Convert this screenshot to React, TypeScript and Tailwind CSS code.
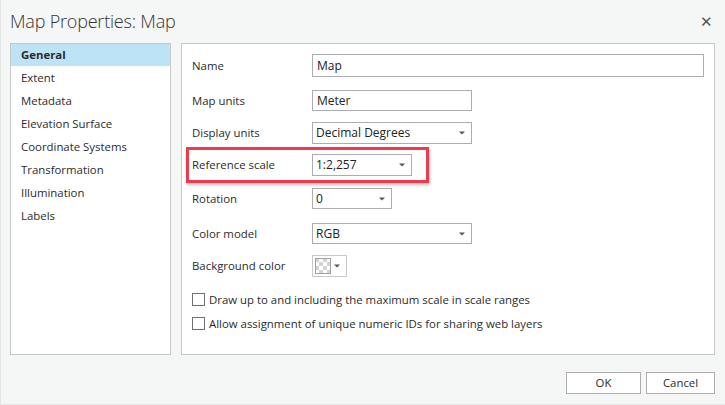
import React from "react";

const font = { fontFamily: '"Open Sans", "Noto Sans", sans-serif' };

function Caret() {
  return (
    <svg width="6" height="4" viewBox="0 0 6 4" className="shrink-0">
      <path d="M0 0.5 L6 0.5 L3 3.5 Z" fill="#555" />
    </svg>
  );
}

function TextBox({ value, w }: { value: string; w: string }) {
  return (
    <div className={`${w} h-full border border-[#abadb3] bg-white flex items-center pl-[4px] text-[12px] text-[#222]`}>
      {value}
    </div>
  );
}

function Select({ value, w }: { value: string; w: string }) {
  return (
    <div className={`${w} h-full border border-[#abadb3] bg-white flex items-center justify-between pl-[3px] pr-[6px] text-[12px] text-[#222]`}>
      <span>{value}</span>
      <Caret />
    </div>
  );
}

function Row({ label, children, h, mt, extra }: { label: string; children: React.ReactNode; h: string; mt: string; extra?: React.ReactNode }) {
  return (
    <div className={`relative flex items-center ${h} ${mt}`}>
      {extra}
      <div className="w-[120px] shrink-0 text-[11.4px] text-[#2b2b2b]">{label}</div>
      {children}
    </div>
  );
}

function Checker() {
  const cells = [];
  for (let r = 0; r < 4; r++)
    for (let c = 0; c < 4; c++)
      if ((r + c) % 2 === 0) cells.push(<rect key={`${r}-${c}`} x={c * 4} y={r * 4} width="4" height="4" fill="#d4d4d4" />);
  return (
    <svg width="16" height="16" viewBox="0 0 16 16">
      <rect x="0" y="0" width="16" height="16" fill="#fff" />
      {cells}
      <rect x="0.5" y="0.5" width="15" height="15" fill="none" stroke="#a0a0a0" />
    </svg>
  );
}

function CheckRow({ text, mt }: { text: string; mt: string }) {
  return (
    <div className={`flex items-center h-[13px] ${mt}`}>
      <div className="w-[13px] h-[13px] border border-[#707070] bg-white shrink-0" />
      <span className="ml-[4px] text-[11.4px] text-[#2b2b2b] whitespace-nowrap">{text}</span>
    </div>
  );
}

export default function App() {
  const items = ["General", "Extent", "Metadata", "Elevation Surface", "Coordinate Systems", "Transformation", "Illumination", "Labels"];
  return (
    <div style={font} className="w-[725px] h-[405px] bg-[#f5f6f6] flex flex-col overflow-hidden border-l border-b border-[#e4e5e5]">
      <div className="h-[43px] shrink-0 flex items-center justify-between pl-[9px] pr-[12px]">
        <span className="text-[18px] font-light text-[#333] tracking-[-0.2px]">Map Properties: Map</span>
        <span className="text-[15px] text-[#555] font-light">✕</span>
      </div>
      <div className="flex gap-[10px] pl-[9px] pr-[10px] h-[312px] shrink-0">
        <div className="w-[161px] h-full border border-[#c8c8c8] bg-white flex flex-col">
          {items.map((it, i) => (
            <div
              key={it}
              className={`flex items-center pl-[10px] text-[11.4px] text-[#2b2b2b] ${i === 0 ? "bg-[#bde3f7] font-bold h-[22px]" : "h-[23px]"}`}
            >
              {it}
            </div>
          ))}
        </div>
        <div className="flex-1 h-full border border-[#c8c8c8] bg-white flex flex-col pl-[10px]">
          <Row label="Name" h="h-[23px]" mt="mt-[10px]">
            <TextBox value="Map" w="w-[392px]" />
          </Row>
          <Row label="Map units" h="h-[21px]" mt="mt-[13px]">
            <TextBox value="Meter" w="w-[160px]" />
          </Row>
          <Row label="Display units" h="h-[22px]" mt="mt-[11px]">
            <Select value="Decimal Degrees" w="w-[160px]" />
          </Row>
          <Row
            label="Reference scale"
            h="h-[22px]"
            mt="mt-[10px]"
            extra={<div className="absolute left-[-6px] top-[-7px] w-[243px] h-[36px] border-[3px] border-[#ec3c4c] shadow-[1px_2px_3px_rgba(0,0,0,0.25)] pointer-events-none" />}
          >
            <Select value="1:2,257" w="w-[100px]" />
          </Row>
          <Row label="Rotation" h="h-[21px]" mt="mt-[12px]">
            <Select value="0" w="w-[80px]" />
          </Row>
          <Row label="Color model" h="h-[21px]" mt="mt-[14px]">
            <Select value="RGB" w="w-[160px]" />
          </Row>
          <Row label="Background color" h="h-[22px]" mt="mt-[11px]">
            <div className="w-[35px] h-full border border-[#c9c9c9] bg-white flex items-center pl-[2px] gap-[3px]">
              <Checker />
              <Caret />
            </div>
          </Row>
          <CheckRow text="Draw up to and including the maximum scale in scale ranges" mt="mt-[16px]" />
          <CheckRow text="Allow assignment of unique numeric IDs for sharing web layers" mt="mt-[11px]" />
        </div>
      </div>
      <div className="flex justify-end gap-[5px] pr-[10px] mt-[17px]">
        <div className="w-[75px] h-[22px] border border-[#adadad] bg-white flex items-center justify-center text-[11.4px] text-[#2b2b2b]">OK</div>
        <div className="w-[69px] h-[22px] border border-[#adadad] bg-white flex items-center justify-center text-[11.4px] text-[#2b2b2b]">Cancel</div>
      </div>
    </div>
  );
}
